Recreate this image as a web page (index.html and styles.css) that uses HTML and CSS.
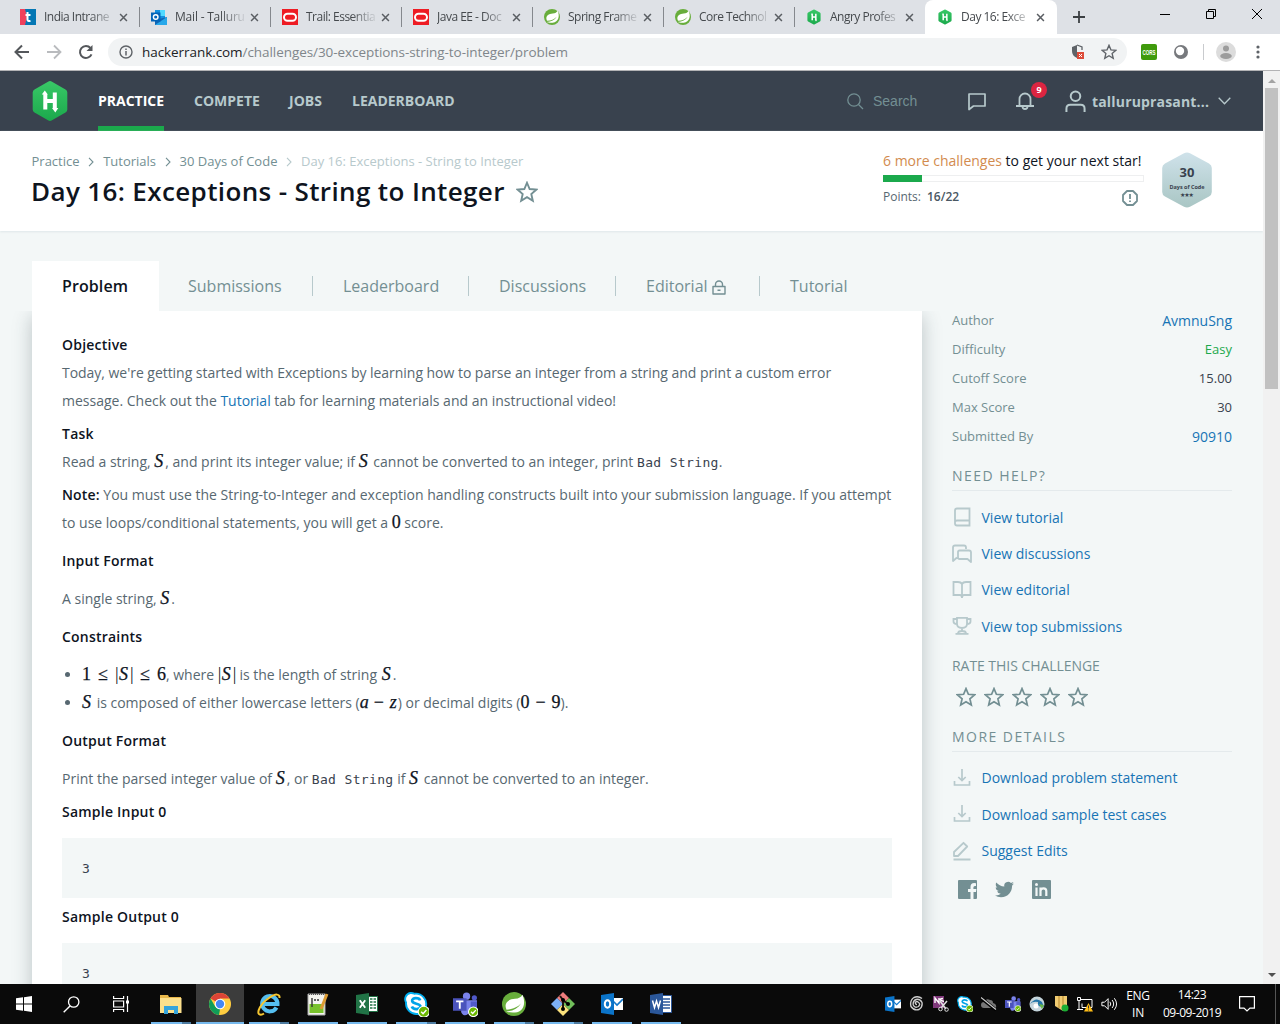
FILE: index.html
```html
<!DOCTYPE html>
<html lang="en">
<head>
<meta charset="utf-8">
<title>Day 16: Exceptions - String to Integer | HackerRank</title>
<link rel="stylesheet" href="styles.css">
</head>
<body>
<svg class="defs" width="0" height="0">
  <defs>
    <linearGradient id="hexg" x1="0" y1="0" x2="0" y2="1"><stop offset="0" stop-color="#39c867"/><stop offset="1" stop-color="#1ba94c"/></linearGradient>
    <linearGradient id="badgeg" x1="0" y1="0" x2="0" y2="1"><stop offset="0" stop-color="#cfe2ea"/><stop offset="1" stop-color="#a9c6c4"/></linearGradient>
    <symbol id="hex" viewBox="0 0 36 42"><path d="M16 1.700Q18 .5 20 1.700L33.500 9.500Q35.300 10.600 35.300 12.500V29.500Q35.300 31.400 33.500 32.500L20 40.300Q18 41.500 16 40.300L2.500 32.500Q.7 31.400 .7 29.500V12.500Q.7 10.600 2.500 9.500Z" fill="url(#hexg)"/><path d="M11.300 29.500V14.500H9.800L12.800 10.500 15.800 14.500H15.300V19H20.800V12.500H24.800V28H26.300L23.300 32.500 20 28H20.800V23H15.300V29.500z" fill="#fff"/></symbol>
    <symbol id="star" viewBox="0 0 20 20"><path d="M10 1.600l2.400 5.700 6.200.5-4.700 4 1.400 6.100-5.300-3.200-5.300 3.200 1.400-6.100-4.700-4 6.200-.5z" fill="none" stroke="currentColor" stroke-width="1.700" stroke-linejoin="miter"/></symbol>
    <symbol id="x" viewBox="0 0 10 10"><path d="M1.200 1.200l7.600 7.600M8.800 1.200L1.200 8.800" stroke="#5a5e63" stroke-width="1.700"/></symbol>
    <symbol id="oracle" viewBox="0 0 16 16"><path fill="#ee1c24" d="M0 0h16v16H0z"/><rect x="2" y="4.700" width="12" height="7" rx="3.500" fill="none" stroke="#fff" stroke-width="2"/></symbol>
    <symbol id="spring" viewBox="0 0 24 24"><circle cx="12" cy="12" r="12" fill="#68ad3c"/><path d="M20.500 2.800C24 11 22 20 13 20.500c-4 .3-7-.2-9-1 7-.4 12-3 15-8-4 4-8 5.500-14.500 6.200C1 10 8 7 13 6.800c4-.2 6-1.500 7.500-4z" fill="#fff"/></symbol>
    <symbol id="outlook" viewBox="0 0 22 22"><path d="M11 5h11v12H11z" fill="#fff"/><path d="M12 8l4 4 6-6" stroke="#1479cc" stroke-width="1.600" fill="none"/><path d="M0 2l13-2v22L0 20z" fill="#0b74c9"/><ellipse cx="6.500" cy="11" rx="2.700" ry="3.700" fill="none" stroke="#fff" stroke-width="2"/></symbol>
    <symbol id="skype" viewBox="0 0 24 24"><path d="M6 1a6 6 0 0 1 4 .7A10 10 0 0 1 21 14a6 6 0 0 1-8 7A10 10 0 0 1 2 10 6 6 0 0 1 6 1z" fill="#fff" stroke="#00aff0" stroke-width="1.800"/><path d="M15.500 8C14.500 5 7.500 5 7.800 8.500c.3 3.500 8 2 8 5.500 0 3-7 3.500-8.300 0" fill="none" stroke="#00a4e8" stroke-width="2.600"/><circle cx="19" cy="19" r="5.300" fill="#6bb700" stroke="#fff"/><path d="M16.500 19l1.800 1.800 3.200-3.500" stroke="#fff" stroke-width="1.400" fill="none"/></symbol>
    <symbol id="teams" viewBox="0 0 24 24"><circle cx="13" cy="4" r="3.500" fill="#7b83eb"/><circle cx="20.500" cy="5.500" r="2.500" fill="#5059c9"/><path d="M8 8h15v8q0 3-3 3h-4q-2 4-6 3-3-2-2-5z" fill="#7b83eb"/><path d="M17 9h6v7q0 3-4 3h-2z" fill="#5059c9"/><path d="M0 6h13v12H0z" fill="#4b53bc"/><path d="M3 9h7M6.500 9v7" stroke="#fff" stroke-width="1.800"/><circle cx="19.500" cy="19" r="4.600" fill="#6bb700" stroke="#fff"/><path d="M17.300 19l1.600 1.600 3-3.200" stroke="#fff" stroke-width="1.300" fill="none"/></symbol>
    <symbol id="dl" viewBox="0 0 20 20"><path d="M10 1v11M6.300 9l3.700 3.500L13.700 9M2.500 13v4h15v-4" fill="none" stroke="currentColor" stroke-width="1.700"/></symbol>
    <symbol id="chev" viewBox="0 0 6 10"><path d="M1 .8L5 5 1 9.200" fill="none" stroke="currentColor" stroke-width="1.100"/></symbol>
  </defs>
</svg>

<header class="browser">
  <div class="tabstrip">
    <div class="tab"><svg class="fav" viewBox="0 0 16 16"><path fill="#f0405c" d="M0 0h16v16H0z"/><path fill="#0477b4" d="M5 0h11v16H5l2-8z"/><path d="M7.500 3v7.500q0 2 3 1.500M5.500 6h5" fill="none" stroke="#fff" stroke-width="2"/></svg><span class="tt">India Intrane</span><svg class="tx"><use href="#x"/></svg></div>
    <div class="tab"><svg class="fav" viewBox="0 0 16 16"><path fill="#1490df" d="M4 1h10v13H4z"/><path fill="#50d9ff" d="M9 1h5v6H9z"/><path fill="#1066b5" d="M16 8v8H4v-5z"/><path fill="#28a8ea" d="M4 16l12-8v8z"/><path fill="#0364b8" d="M0 3.500h9.500v9H0z"/><circle cx="4.700" cy="8" r="2.300" stroke="#fff" stroke-width="1.400" fill="none"/></svg><span class="tt wide">Mail - Talluru</span><svg class="tx"><use href="#x"/></svg></div>
    <div class="tab"><svg class="fav"><use href="#oracle"/></svg><span class="tt">Trail: Essentia</span><svg class="tx"><use href="#x"/></svg></div>
    <div class="tab"><svg class="fav"><use href="#oracle"/></svg><span class="tt">Java EE - Doc</span><svg class="tx"><use href="#x"/></svg></div>
    <div class="tab"><svg class="fav"><use href="#spring"/></svg><span class="tt">Spring Frame</span><svg class="tx"><use href="#x"/></svg></div>
    <div class="tab"><svg class="fav"><use href="#spring"/></svg><span class="tt">Core Technol</span><svg class="tx"><use href="#x"/></svg></div>
    <div class="tab last"><svg class="fav"><use href="#hex"/></svg><span class="tt">Angry Profes</span><svg class="tx"><use href="#x"/></svg></div>
    <div class="tab active"><svg class="fav"><use href="#hex"/></svg><span class="tt">Day 16: Exce</span><svg class="tx"><use href="#x"/></svg></div>
    <svg class="plus" viewBox="0 0 12 12"><path d="M6 0v12M0 6h12" stroke="#3c4043" stroke-width="1.800"/></svg>
    <div class="winbtns">
      <svg viewBox="0 0 12 12"><path d="M1 6.500h10" stroke="#000"/></svg>
      <svg viewBox="0 0 12 12"><path d="M1.500 3.500h7v7h-7zM3.500 3V1.500h7v7H9" fill="none" stroke="#000"/></svg>
      <svg viewBox="0 0 12 12"><path d="M1 1l10 10M11 1L1 11" stroke="#000"/></svg>
    </div>
  </div>
  <div class="toolbar">
    <div class="navbtns">
      <svg viewBox="0 0 16 16"><path d="M15 8H2M8 1.500L1.500 8 8 14.500" fill="none" stroke="#54575b" stroke-width="2"/></svg>
      <svg viewBox="0 0 16 16"><path d="M1 8h13M8 1.500L14.500 8 8 14.500" fill="none" stroke="#b9bbbe" stroke-width="1.800"/></svg>
      <svg viewBox="0 0 16 16"><path d="M13.500 10.300A6 6 0 1 1 12.500 4" fill="none" stroke="#54575b" stroke-width="2"/><path d="M14.500 1v6h-6z" fill="#54575b"/></svg>
    </div>
    <div class="omni">
      <svg class="info" viewBox="0 0 14 14"><circle cx="7" cy="7" r="6" fill="none" stroke="#5f6368" stroke-width="1.400"/><path d="M7 6v4.500M7 3.400v1.500" stroke="#5f6368" stroke-width="1.500"/></svg>
      <span class="url"><b>hackerrank.com</b>/challenges/30-exceptions-string-to-integer/problem</span>
      <svg class="shield" viewBox="0 0 16 16"><path d="M7 1L2 3v4q0 5 5 7z" fill="#5f6368"/><path d="M7 1l5 2v3" fill="none" stroke="#5f6368" stroke-width="1.300"/><path fill="#dd4b39" d="M7 8h7v7H7z"/><path d="M9 10l3 3m0-3l-3 3" stroke="#fff"/></svg>
      <svg class="ostar"><use href="#star"/></svg>
    </div>
    <svg class="cors" viewBox="0 0 16 16"><rect width="16" height="16" rx="2" fill="#3f9a0c"/><text x="1.500" y="11" textLength="13" lengthAdjust="spacingAndGlyphs">CORS</text></svg>
    <svg class="moon" viewBox="0 0 14 14"><circle cx="7" cy="7" r="7" fill="#77797d"/><circle cx="6" cy="6" r="4.200" fill="#fff"/></svg>
    <i class="vsep"></i>
    <svg class="avatar" viewBox="0 0 20 20"><circle cx="10" cy="10" r="10" fill="#dcdcdc"/><circle cx="10" cy="6.500" r="3" fill="#9c9c9c"/><ellipse cx="10" cy="14" rx="5.800" ry="3" fill="#9c9c9c"/></svg>
    <svg class="dots" viewBox="0 0 4 14"><g fill="#5f6368"><circle cx="2" cy="2" r="1.600"/><circle cx="2" cy="7" r="1.600"/><circle cx="2" cy="12" r="1.600"/></g></svg>
  </div>
</header>

<div class="viewport">
<div class="page">
  <nav class="top">
    <svg class="logo"><use href="#hex"/></svg>
    <a class="on n1">PRACTICE</a><a class="n2">COMPETE</a><a class="n3">JOBS</a><a class="n4">LEADERBOARD</a>
    <div class="topright">
      <svg class="srch" viewBox="0 0 17 17"><circle cx="7" cy="7" r="6.200" fill="none" stroke="#738f93" stroke-width="1.300"/><path d="M11.500 11.500l4.500 4.500" stroke="#738f93" stroke-width="1.300"/></svg>
      <span class="search">Search</span>
      <svg class="chat" viewBox="0 0 18 18"><path d="M1 1h16v12H5.500L1 16.500z" fill="none" stroke="#b7c9cc" stroke-width="1.700" stroke-linejoin="round"/></svg>
      <span class="bellwrap"><svg class="bell" viewBox="0 0 18 18"><path d="M0 14h18M3.500 13.500V7a5.500 5.500 0 0 1 11 0v6.500M6.500 14.500a2.500 2.500 0 0 0 5 0" fill="none" stroke="#b7c9cc" stroke-width="1.800"/></svg><em>9</em></span>
      <svg class="usr" viewBox="0 0 22 24"><circle cx="11" cy="6.500" r="5" fill="none" stroke="#b7c9cc" stroke-width="2.100"/><path d="M1.500 23v-3.500q0-4 4-4h11q4 0 4 4V23" fill="none" stroke="#b7c9cc" stroke-width="2.100"/></svg>
      <span class="uname">talluruprasant...</span>
      <svg class="dn" viewBox="0 0 13 8"><path d="M.7 .8l5.800 6 5.800-6" fill="none" stroke="#b7c9cc" stroke-width="1.300"/></svg>
    </div>
  </nav>

  <section class="hero">
    <div class="herol">
      <div class="crumbs"><span>Practice</span><svg><use href="#chev"/></svg><span>Tutorials</span><svg><use href="#chev"/></svg><span>30 Days of Code</span><svg class="pale"><use href="#chev"/></svg><span class="pale2">Day 16: Exceptions - String to Integer</span></div>
      <div class="title"><h1>Day 16: Exceptions - String to Integer</h1><svg><use href="#star"/></svg></div>
    </div>
    <div class="progress">
      <p class="more"><span>6 more challenges</span> to get your next star!</p>
      <div class="bar"><i></i></div>
      <div class="pts"><span>Points:</span><b>16/22</b><svg viewBox="0 0 16 16"><path d="M5 1h6l4 4v6l-4 4H5l-4-4V5z" fill="none" stroke="#738f93" stroke-width="1.800" stroke-linejoin="round"/><path d="M8 4v5M8 10.500v1.600" stroke="#738f93" stroke-width="1.800"/></svg></div>
    </div>
    <svg class="badge" viewBox="0 0 50 56"><path d="M22 1.300Q25-.3 28 1.300L47 11.500Q49.800 13 49.800 16V40Q49.800 43 47 44.500L28 54.700Q25 56.300 22 54.700L3 44.500Q.2 43 .2 40V16Q.2 13 3 11.500Z" fill="url(#badgeg)"/><text x="25" y="25" text-anchor="middle" class="b30">30</text><text x="25" y="36.500" text-anchor="middle" class="bdoc" textLength="35">Days of Code</text><text x="25" y="44.500" text-anchor="middle" class="bst" textLength="14">★★★</text></svg>
  </section>

  <div class="cols">
    <main>
      <div class="ptabs"><a class="sel"><span class="p1">Problem</span></a><a><span class="p2">Submissions</span></a><a><span class="p3">Leaderboard</span></a><a><span class="p4">Discussions</span></a><a><span class="p5">Editorial</span><svg class="lock" viewBox="0 0 14 15"><path d="M1 6.500h12v7.500H1zM3.500 6.500V4.500a3.500 3.500 0 0 1 7 0v2M5.500 10.300h3" fill="none" stroke="#738f93" stroke-width="1.400" stroke-linejoin="round"/></svg></a><a><span class="p6">Tutorial</span></a></div>
      <article>
        <h3>Objective</h3>
        <p><span class="l1">Today, we're getting started with Exceptions by learning how to parse an integer from a string and print a custom error</span><br><span class="l2">message. Check out the <a>Tutorial</a> tab for learning materials and an instructional video!</span></p>
        <h3 class="g5">Task</h3>
        <p>Read a string, <i>S</i>, and print its integer value; if <i>S</i> cannot be converted to an integer, print <code>Bad String</code>.</p>
        <p class="g5"><strong>Note:</strong> You must use the String-to-Integer and exception handling constructs built into your submission language. If you attempt<br>to use loops/conditional statements, you will get a <u>0</u> score.</p>
        <h3 class="g10">Input Format</h3>
        <p class="g10">A single string, <i>S</i>.</p>
        <h3 class="g10">Constraints</h3>
        <ul class="g10">
          <li><u>1</u><u class="op">≤</u><u class="v">|</u><i>S</i><u class="v">|</u><u class="op">≤</u><u>6</u>, where <u class="v">|</u><i>S</i><u class="v">|</u> is the length of string <i>S</i>.</li>
          <li><i>S</i> is composed of either lowercase letters (<i class="low">a</i><u class="op minus">−</u><i class="low">z</i>) or decimal digits (<u>0</u><u class="op minus">−</u><u>9</u>).</li>
        </ul>
        <h3 class="g10">Output Format</h3>
        <p class="g10">Print the parsed integer value of <i>S</i>, or <code>Bad String</code> if <i>S</i> cannot be converted to an integer.</p>
        <h3 class="g5">Sample Input 0</h3>
        <pre>3</pre>
        <h3 class="g5">Sample Output 0</h3>
        <pre>3</pre>
      </article>
    </main>
    <aside>
      <dl>
        <div><dt>Author</dt><dd class="blue big">AvmnuSng</dd></div>
        <div><dt>Difficulty</dt><dd class="green">Easy</dd></div>
        <div><dt>Cutoff Score</dt><dd>15.00</dd></div>
        <div><dt>Max Score</dt><dd>30</dd></div>
        <div><dt>Submitted By</dt><dd class="blue big">90910</dd></div>
      </dl>
      <h4 class="need">NEED HELP?</h4>
      <div class="links">
        <a><svg viewBox="0 0 20 20"><path d="M5 1.500h12.500v17H5q-2 0-2-2v-13q0-2 2-2zM3 15q0-1.500 2-1.500h12.500" fill="none" stroke="currentColor" stroke-width="1.800"/></svg>View tutorial</a>
        <a><svg viewBox="0 0 20 20"><path d="M5 13.500l-4 3.500V3.500q0-2 2-2h9q2 0 2 2V5M7.500 6.500H17q2 0 2 2V18l-3.500-3h-8q-1.500 0-1.500-1.500V8q0-1.500 1.500-1.500z" fill="none" stroke="currentColor" stroke-width="1.800" stroke-linejoin="round"/></svg>View discussions</a>
        <a><svg viewBox="0 0 20 20"><path d="M10 4Q9 2 6 2H1.500v13H8q2 0 2 3 0-3 2-3h6.500V2H14q-3 0-4 2v12" fill="none" stroke="currentColor" stroke-width="1.800"/></svg>View editorial</a>
        <a><svg viewBox="0 0 20 20"><path d="M5 1.800h10v6q0 4.200-5 4.200T5 7.800zM5 3H1.500v2.500Q1.500 8 5 8M15 3h3.500v2.500Q18.500 8 15 8M10 12v3M6 17.500q0-2.500 4-2.500t4 2.500M3.500 17.800h13" fill="none" stroke="currentColor" stroke-width="1.800"/></svg>View top submissions</a>
      </div>
      <h5>RATE THIS CHALLENGE</h5>
      <div class="stars"><svg><use href="#star"/></svg><svg><use href="#star"/></svg><svg><use href="#star"/></svg><svg><use href="#star"/></svg><svg><use href="#star"/></svg></div>
      <h4 class="moreh">MORE DETAILS</h4>
      <div class="links">
        <a><svg><use href="#dl"/></svg>Download problem statement</a>
        <a><svg><use href="#dl"/></svg>Download sample test cases</a>
        <a><svg viewBox="0 0 20 20"><path d="M2 11L11.500 1.800l3.700 3.700L6 15H2zM1.500 18.500h17" fill="none" stroke="currentColor" stroke-width="1.800" stroke-linejoin="round"/></svg>Suggest Edits</a>
      </div>
      <div class="social">
        <svg viewBox="0 0 19 19"><path fill="#738f93" d="M1 0h17q1 0 1 1v17q0 1-1 1h-2.500v-7H18l.4-3h-3V7.500q0-1.500 1.500-1.500H18V3.300Q12.500 2.300 12.500 7v2H10v3h2.500v7H1q-1 0-1-1V1q0-1 1-1z"/></svg>
        <svg viewBox="0 0 24 24"><path fill="#738f93" d="M23.950 4.570a10 10 0 0 1-2.820.770 4.960 4.960 0 0 0 2.160-2.720c-.950.550-2 .950-3.130 1.180a4.920 4.920 0 0 0-8.380 4.480C7.690 8.100 4.070 6.130 1.640 3.160a4.820 4.820 0 0 0-.660 2.480c0 1.710.870 3.210 2.190 4.100a4.900 4.900 0 0 1-2.230-.620v.060a4.920 4.920 0 0 0 3.950 4.830 5 5 0 0 1-2.210.080 4.940 4.940 0 0 0 4.600 3.420A9.870 9.870 0 0 1 0 19.540a13.990 13.990 0 0 0 7.550 2.210c9.050 0 14-7.500 14-13.980 0-.210 0-.420-.010-.630a9.940 9.940 0 0 0 2.410-2.570z"/></svg>
        <svg viewBox="0 0 19 19"><path fill="#738f93" d="M1 0h17q1 0 1 1v17q0 1-1 1H1q-1 0-1-1V1q0-1 1-1z"/><path d="M4.500 7.500V16M8.500 16V7.500M8.500 11q0-2.700 3-2.700 2.800 0 2.800 2.700v5" fill="none" stroke="#f3f7f7" stroke-width="2.200"/><circle cx="4.500" cy="4.500" r="1.500" fill="#f3f7f7"/></svg>
      </div>
    </aside>
  </div>
</div>
<div class="scroll"><i class="up"></i><b></b><i class="down"></i></div>
</div>

<footer class="taskbar">
  <div class="apps">
    <span class="app"><svg width="16" height="16" viewBox="0 0 16 16"><path fill="#fff" d="M0 2.300L7 1.300v6.200H0zM8 1.200L16 0v7.500H8zM0 8.500h7v6.200l-7-1zM8 8.500h8V16l-8-1.200z"/></svg></span>
    <span class="app sys"><svg width="17" height="17" viewBox="0 0 17 17"><circle cx="10.700" cy="6" r="5.200" fill="none" stroke="#fff" stroke-width="1.300"/><path d="M7 10L.7 16.300" stroke="#fff" stroke-width="1.400"/></svg></span>
    <span class="app sys"><svg width="16" height="16" viewBox="0 0 16 16"><path d="M.6 0v2.500h10V0M.6 16v-2.500h10V16M.6 5h10v6H.6zM14.500 0v16" fill="none" stroke="#fff" stroke-width="1.200"/><path fill="#fff" d="M13 4.500h3v3h-3z"/></svg></span>
    <span class="app run two"><svg width="22" height="20" viewBox="0 0 22 20"><path fill="#e9b84a" d="M0 1h8l1 2h12v15H0z"/><path fill="#fce08c" d="M0 4h21.500v15H0z"/><path fill="#36a4dc" d="M4 12h14v8h-4v-4H8v4H4z"/></svg></span>
    <span class="app run cur"><svg width="22" height="22" viewBox="0 0 22 22"><circle cx="11" cy="11" r="11" fill="#ffcd40"/><path d="M11 11L1.500 5.500A11 11 0 0 1 20.500 5.500H11z" fill="#dc4437"/><path d="M1.500 5.500L6.300 13.700 11 16.500 10 22A11 11 0 0 1 1.500 5.500z" fill="#109d59"/><circle cx="11" cy="11" r="5.300" fill="#fff"/><circle cx="11" cy="11" r="4.200" fill="#4587f4"/></svg></span>
    <span class="app run two"><svg width="24" height="24" viewBox="0 0 24 24"><path d="M19.500 15.500A7.700 7.700 0 1 1 20.500 12H6" fill="none" stroke="#55bef0" stroke-width="4"/><path d="M22.500 6C23 2 19 1 12 6 3 12 0 20 2 22q2 1.500 5-.5" fill="none" stroke="#f6c731" stroke-width="2"/></svg></span>
    <span class="app run"><svg width="22" height="24" viewBox="0 0 22 24"><path fill="#f4f4ef" stroke="#aaa" d="M1 2h17v21H1z"/><path fill="#78c22b" d="M2.500 12h14v9h-14z"/><path d="M2 2h15" stroke="#555" stroke-width="2" stroke-dasharray="1 1"/><path d="M5 6v9M7 8h2m1 0h2" stroke="#333" stroke-width="1.400"/><path d="M20 2l-6 15" stroke="#dc9b33" stroke-width="3"/></svg></span>
    <span class="app run"><svg width="22" height="22" viewBox="0 0 22 22"><path fill="#fff" stroke="#217346" d="M12 3.500h9.500v15H12z"/><path d="M14 6h6M14 9h6M14 12h6M14 15h6" stroke="#217346" stroke-width="1.500"/><path d="M17 4v14" stroke="#fff"/><path fill="#217346" d="M0 2l13-2v22L0 20z"/><path d="M3.800 7.300l5.400 7.400M9.200 7.300l-5.400 7.400" stroke="#fff" stroke-width="1.900"/></svg></span>
    <span class="app run two"><svg width="25" height="25"><use href="#skype"/></svg></span>
    <span class="app run"><svg width="25" height="25"><use href="#teams"/></svg></span>
    <span class="app run two"><svg width="24" height="24"><use href="#spring"/></svg></span>
    <span class="app run two"><svg width="24" height="24" viewBox="0 0 24 24"><path fill="#ef7d7d" d="M12 0l6 6-6 6-6-6z"/><path fill="#7cb0f5" d="M6 6l6 6-6 6-6-6z"/><path fill="#72bf5b" d="M18 6l6 6-6 6-6-6z"/><path fill="#fce27c" d="M12 12l6 6-6 6-6-6z"/><path d="M9 4l3 4v10M12 8l5 4" stroke="#20150f" stroke-width="2" fill="none"/><circle cx="12" cy="8" r="2"/><circle cx="12" cy="17" r="2"/><circle cx="17" cy="12" r="2"/></svg></span>
    <span class="app run"><svg width="22" height="22"><use href="#outlook"/></svg></span>
    <span class="app run"><svg width="22" height="22" viewBox="0 0 22 22"><path fill="#fff" stroke="#2b579a" d="M12 2.500h9.500v17H12z"/><path d="M13 6h7M13 9h7M13 12h7M13 15h7" stroke="#2b579a" stroke-width="1.300"/><path fill="#2b579a" d="M0 2l13-2v22L0 20z"/><path d="M2.500 7.500l2 7 2-6.500 2 6.500 2-7" fill="none" stroke="#fff" stroke-width="1.500"/></svg></span>
  </div>
  <div class="tray">
    <svg viewBox="0 0 22 22"><use href="#outlook"/></svg>
    <svg viewBox="0 0 16 16"><path d="M8 8.500a1.500 1.500 0 1 1 1-2.500Q12 8 9.500 10.500 6 12.500 4.300 9 3.500 5 7 3.500q4-1 6 3 .8 4.500-3 7-5 1.500-8-3Q.5 4.500 5 1.500q4-2 8 1" fill="none" stroke="#ccc" stroke-width="1.400"/></svg>
    <svg viewBox="0 0 16 16"><path fill="#80397b" d="M0 0h11v12H0z"/><path d="M2 7V2l4 5V2M10 2.500q-4 0-2 2l3 1" fill="none" stroke="#fff" stroke-width="1.400"/><path d="M7 5l6 8M14 5l-6 7" stroke="#ddd" stroke-width="1.600"/><circle cx="7.500" cy="13" r="1.800" fill="none" stroke="#ddd"/><circle cx="13.500" cy="13.500" r="1.800" fill="none" stroke="#ddd"/></svg>
    <svg><use href="#skype"/></svg>
    <svg viewBox="0 0 16 16"><path d="M3 12a3 3 0 0 1 0-6Q5 2 9 4q3 0 3 3 4 1 3 5z" fill="#777"/><path d="M0 2l15 12" stroke="#000" stroke-width="3"/><path d="M0 1.500l15 12" stroke="#ccc" stroke-width="1.200"/></svg>
    <svg><use href="#teams"/></svg>
    <svg viewBox="0 0 16 16"><circle cx="8" cy="8" r="7.500" fill="#c5d5dc"/><path d="M1 8q6-8 12-2l2 5-6-1V6q-5-1-8 2z" fill="#2475a8"/><circle cx="7" cy="10" r="2.500" fill="#fff"/><path d="M10 8l5 1-2 4z" fill="#69b445"/></svg>
    <svg viewBox="0 0 16 16"><path d="M2 0h12v11l-4 4-8-5z" fill="#f0cc72"/><path d="M6 0v12M10 0v14" stroke="#b8872c"/><circle cx="12" cy="12" r="3.500" fill="#1cae34"/></svg>
    <svg viewBox="0 0 16 16"><path d="M3 3.500h12v8H5v-4M.5 1.500h3v3h-3zM2 5v8M0 13.500h6" fill="none" stroke="#fff"/><path d="M11.500 7l4.500 8.500H7z" fill="#ffbd16"/><path d="M11.500 9.500v3m0 1v1" stroke="#333"/></svg>
    <svg viewBox="0 0 18 16"><path d="M1 6h3l4-4v12L4 10H1zM10 5.500q2 2.500 0 5M12.500 3.500q3.500 4.500 0 9M15 1.500q5 6.500 0 13" fill="none" stroke="#fff" stroke-width="1.100"/></svg>
  </div>
  <div class="lang">ENG<br>IN</div>
  <div class="clock"><span>14:23</span><span class="date">09-09-2019</span></div>
  <svg class="note" viewBox="0 0 16 16"><path d="M.6 .6h14.800v11.500H11L8 15l-3-2.900H.6z" fill="none" stroke="#fff" stroke-width="1.200"/></svg>
  <i class="peek"></i>
</footer>
</body>
</html>
```
FILE: styles.css
```css
* { box-sizing: border-box; }
body { margin: 0; width: 1280px; height: 1024px; overflow: hidden; display: flex; flex-direction: column; font-family: "Open Sans", "Noto Sans", sans-serif; font-size: 14px; background: #fff; }
svg { flex: none; display: block; }
h1, h3, h4, h5, p, ul, dl, dd, pre { margin: 0; padding: 0; }
.defs { position: absolute; }

.browser { height: 71px; flex: none; border-bottom: 1px solid #b3b3b5; }
.tabstrip { height: 34px; background: #dee1e6; display: flex; align-items: center; padding-left: 8px; }
.tab { width: 131px; height: 34px; padding-left: 12px; display: flex; align-items: center; position: relative; }
.tab::after { content: ""; position: absolute; right: -1px; top: 7px; width: 1px; height: 20px; background: #85888d; }
.tab.last::after, .tab.active::after { display: none; }
.tab.active { width: 132px; background: #fff; border-radius: 8px 8px 0 0; }
.fav { width: 16px; height: 16px; }
.tt { margin-left: 8px; width: 76px; white-space: nowrap; font-size: 12px; line-height: 20px; letter-spacing: -.5px; color: #45494d; -webkit-mask-image: linear-gradient(90deg, #000 60%, rgba(0,0,0,.15) 90%); mask-image: linear-gradient(90deg, #000 60%, rgba(0,0,0,.15) 90%); }
.tt.wide { letter-spacing: -.2px; }
.tx { width: 9px; height: 9px; margin-left: -1px; }
.plus { width: 12px; height: 12px; margin-left: 16px; }
.winbtns { margin-left: auto; display: flex; gap: 34px; padding: 0 17px 6px 0; }
.winbtns svg { width: 12px; height: 12px; }
.toolbar { height: 36px; display: flex; align-items: center; background: #fff; }
.navbtns { display: flex; gap: 16px; padding-left: 14px; width: 108px; }
.navbtns svg { width: 16px; height: 16px; }
.omni { width: 1019px; height: 28px; border-radius: 14px; background: #f1f3f4; display: flex; align-items: center; padding-left: 11px; }
.info { width: 14px; height: 14px; }
.url { margin-left: 9px; font-size: 13.500px; color: #80868b; white-space: nowrap; width: 929px; letter-spacing: -.065px; }
.url b { font-weight: 400; color: #202124; }
.shield { width: 16px; height: 16px; margin-left: -1px; }
.ostar { width: 16px; height: 16px; margin-left: 15px; color: #5f6368; }
.cors { width: 16px; height: 16px; margin-left: 14px; }
.cors text { font: bold 8px "Liberation Sans", sans-serif; fill: #fff; }
.moon { width: 14px; height: 14px; margin-left: 17px; }
.vsep { width: 1px; height: 16px; background: #c9cbce; margin-left: 15px; }
.avatar { width: 20px; height: 20px; margin-left: 12px; }
.dots { width: 4px; height: 14px; margin-left: 20px; }

.viewport { height: 913px; flex: none; display: flex; overflow: hidden; }
.page { width: 1263px; background: #f3f7f7; overflow: hidden; }
.top { height: 60px; background: #39424e; display: flex; align-items: center; padding: 0 31px 0 32px; }
.logo { width: 36px; height: 42px; margin-right: 30px; }
.top a { font-weight: 700; font-size: 14px; line-height: 60px; height: 60px; color: #b7c9cc; margin-right: 30px; white-space: nowrap; }
.top a.on { color: #fff; border-bottom: 5px solid #1ba94c; }
.n1 { width: 66px; } .n2 { width: 65px; } .n3 { width: 33px; } .n4 { width: 102px; }
.topright { margin-left: auto; display: flex; align-items: center; }
.srch { width: 17px; height: 17px; }
.search { font: 14px "Liberation Sans", sans-serif; color: #738f93; margin-left: 9px; width: 95px; }
.chat { width: 18px; height: 18px; margin-top: 2px; }
.bellwrap { position: relative; margin-left: 30px; }
.bell { width: 18px; height: 18px; }
.bellwrap em { position: absolute; left: 15px; top: -10px; width: 16px; height: 16px; border-radius: 8px; background: #dc2541; color: #fff; font: bold 9px/16px "Open Sans", sans-serif; text-align: center; }
.usr { width: 21px; height: 23px; margin-left: 31px; }
.uname { font-weight: 700; font-size: 14px; color: #b7c9cc; margin-left: 6px; width: 126px; letter-spacing: .17px; white-space: nowrap; }
.dn { width: 13px; height: 8px; margin-right: 1px; }

.hero { height: 100px; background: #fff; display: flex; padding-left: 32px; box-shadow: 0 1px 2px #dfe7e9; position: relative; }
.herol { width: 851px; }
.crumbs { display: flex; align-items: center; font-size: 13px; color: #738f93; height: 20px; margin-top: 20px; margin-left: -.5px; }
.crumbs svg { width: 6px; height: 10px; margin: 1px 8.800px 0; }
.crumbs .pale, .crumbs .pale2 { color: #b7c9cc; }
.title { display: flex; align-items: center; height: 40px; }
h1 { font-size: 26px; font-weight: 600; color: #0e141e; width: 474px; line-height: 38px; white-space: nowrap; letter-spacing: .37px; margin-left: -1px; padding-bottom: 1px; }
.title svg { width: 22px; height: 22px; margin: 1px 0 0 11px; color: #738f93; }
.progress { width: 260px; margin-top: 19px; }
.more { font-size: 14px; line-height: 22px; color: #0e141e; white-space: nowrap; }
.more span { color: #d28b4e; }
.bar { width: 261px; height: 7px; border: 1px solid #eeeff0; margin-top: 3px; }
.bar i { display: block; width: 39px; height: 7px; margin: -1px; background: #1ba94c; }
.pts { display: flex; align-items: center; font-size: 12px; color: #576871; height: 22px; margin-top: 3px; }
.pts b { font-weight: 600; margin-left: 6px; color: #4a5763; }
.pts svg { width: 16px; height: 16px; margin: 3px 5px 0 auto; }
.badge { width: 50px; height: 56px; margin: 21px 0 0 19px; }
.b30 { font: bold 13px "Open Sans", sans-serif; fill: #39424e; }
.bdoc { font: bold 5.500px "Open Sans", sans-serif; fill: #39424e; }
.bst { font: 6px "DejaVu Sans", sans-serif; fill: #39424e; }

.cols { display: flex; padding: 30px 31px 0 32px; gap: 30px; }
main { width: 890px; }
.ptabs { display: flex; height: 50px; }
.ptabs a { padding: 0 30px; line-height: 50px; font-size: 16px; color: #738f93; display: flex; align-items: center; position: relative; white-space: nowrap; }
.ptabs a:not(.sel):not(:last-child) { border-right: 1px solid #c2cfd1; border-image: linear-gradient(transparent 30%, #b7c9cc 30%, #b7c9cc 70%, transparent 70%) 1; }
.ptabs .sel { background: #fff; color: #0e141e; font-weight: 600; padding-right: 31px; letter-spacing: .1px; }
.p1 { width: 66px; } .p2 { width: 94px; } .p3 { width: 95px; } .p4 { width: 86px; } .p5 { width: 62px; } .p6 { width: 57px; }
.lock { width: 14px; height: 15px; margin: 2px 3px 0 4px; }
.ptabs a:nth-child(2) { padding-left: 29px; }
article { background: #fff; padding: 20px 30px; height: 760px; box-shadow: 0 5px 18px rgba(40,60,70,.28); color: #576871; line-height: 28px; clip-path: inset(0 -30px); white-space: nowrap; }
h3 { font-size: 14px; font-weight: 600; line-height: 28px; color: #0e141e; letter-spacing: .22px; }
article strong { font-weight: 600; color: #0e141e; letter-spacing: .15px; }
article a { color: #1774b5; }
.l1 { letter-spacing: -.034px; }
.g5 { margin-top: 5px; } .g10 { margin-top: 10px; }
article i, article u { font: italic 18px/18px "Liberation Serif", serif; color: #0e141e; text-decoration: none; display: inline-block; width: 11px; -webkit-text-stroke: .25px #0e141e; }
article u { font-style: normal; width: 9px; }
article u.op { width: 24px; text-align: center; }
article u.minus { width: 22px; }
article u.v { width: 3px; -webkit-text-stroke: 0; }
article u.v + i { margin-left: 1px; }
article i.low { width: 8px; }
code, pre { font: 13px "DejaVu Sans Mono", monospace; color: #39424e; }
code { letter-spacing: .35px; }
ul { list-style: none; padding-left: 20px; }
li { position: relative; }
li::before { content: ""; position: absolute; left: -17px; top: 11px; width: 5px; height: 5px; border-radius: 50%; background: #576871; }
pre { height: 60px; margin-top: 12px; background: #f3f7f7; padding: 1px 20px 0; line-height: 60px; }

aside { width: 280px; padding-top: 45px; }
dl div { display: flex; justify-content: space-between; height: 29px; line-height: 29px; font-size: 13px; color: #39424e; }
dt { color: #738f93; }
.big { font-size: 14px; }
.blue { color: #1774b5; } .green { color: #1ba94c; }
h4 { font-size: 14px; font-weight: 400; letter-spacing: 1.450px; line-height: 28px; height: 29px; color: #738f93; border-bottom: 1px solid #e4eaec; }
.need { margin-top: 11px; }
.links { margin-top: 8px; }
.links a { display: flex; align-items: center; height: 36.400px; color: #1774b5; font-size: 14px; }
.links svg { width: 20px; height: 20px; margin-right: 9.500px; color: #b7c9cc; }
h5 { font-size: 14px; font-weight: 400; line-height: 22px; color: #738f93; margin-top: 10px; letter-spacing: -.05px; }
.stars { display: flex; gap: 8px; margin: 10px 0 0 3.500px; color: #738f93; }
.stars svg { width: 20px; height: 20px; }
.moreh { margin-top: 16px; }
.social { display: flex; gap: 18px; margin: 11px 0 0 6px; }
.social svg { width: 19px; height: 19px; }

.scroll { width: 17px; background: #f1f1f1; display: flex; flex-direction: column; align-items: center; }
.scroll b { width: 13px; height: 301px; background: #c1c1c1; }
.up { height: 0; border: 4px solid transparent; border-top: 0; border-bottom: 4px solid #a3a3a3; margin: 8px 0 5px; }
.down { border: 4px solid transparent; border-bottom: 0; border-top: 4px solid #505050; margin: auto 0 7px; }

.taskbar { height: 40px; flex: none; background: #0a0a0a; color: #fff; display: flex; align-items: center; }
.apps { display: flex; width: 885px; gap: 1px; }
.app { width: 48px; height: 40px; display: flex; align-items: center; justify-content: center; position: relative; }
.app.sys { padding-right: 3px; }
.run::after { content: ""; position: absolute; bottom: 0; left: 4px; width: 40px; height: 2px; background: #76b9ed; }
.run.two::after { background: linear-gradient(90deg, #76b9ed 31px, #4d7ba0 31px); }
.run.cur { background: #3c3c3c; }
.run.cur::after { left: 0; width: 48px; }
.tray { display: flex; gap: 8px; }
.tray svg { width: 16px; height: 16px; }
.lang { width: 34px; margin-left: 4px; text-align: center; font-size: 12px; line-height: 17px; letter-spacing: -.3px; }
.clock { width: 66px; margin-left: 4px; font-size: 12px; line-height: 18px; display: flex; flex-direction: column; align-items: center; letter-spacing: -.45px; }
.note { width: 16px; height: 16px; margin-left: 14px; }
.peek { width: 1px; height: 40px; background: #555; margin-left: 20px; }
```
